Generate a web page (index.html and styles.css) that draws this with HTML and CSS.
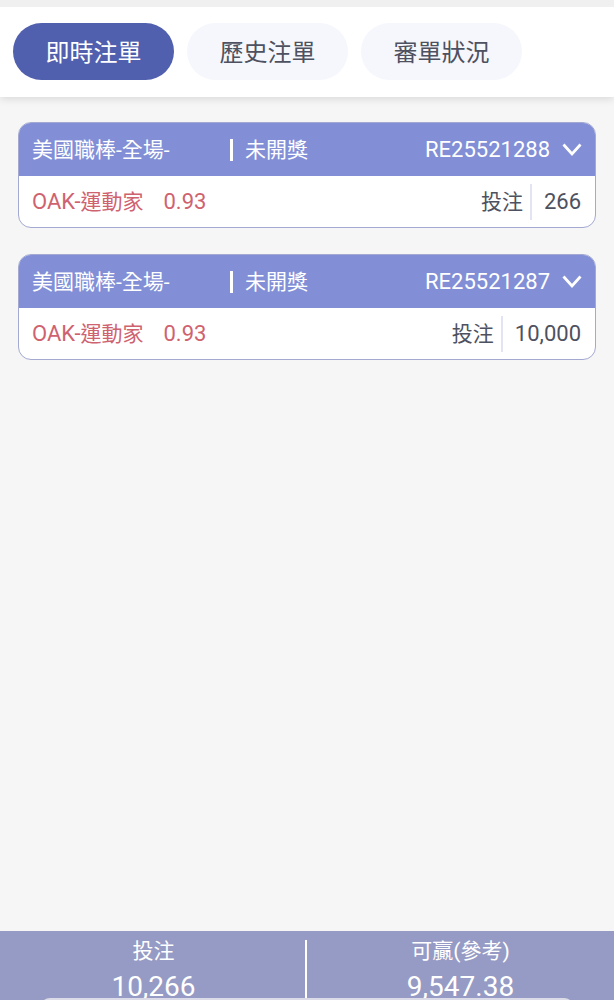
FILE: index.html
```html
<!DOCTYPE html>
<html lang="zh-Hant">
<head>
<meta charset="utf-8">
<meta name="viewport" content="width=device-width, initial-scale=1">
<title>即時注單</title>
<link rel="stylesheet" href="styles.css">
</head>
<body>
<div class="app">
  <nav class="tabs">
    <button class="tab tab-active" type="button">即時注單</button>
    <button class="tab" type="button">歷史注單</button>
    <button class="tab" type="button">審單狀況</button>
  </nav>
  <main class="bets">
    <article class="bet">
      <header class="bet-head">
        <span class="league">美國職棒-全場-</span>
        <span class="status">未開獎</span>
        <span class="number">RE25521288</span>
        <button class="toggle" type="button" aria-label="展開">
          <svg width="20" height="14" viewBox="0 0 20 14"><path d="M1.5 1.5 L10 11 L18.5 1.5" fill="none" stroke="currentColor" stroke-width="2.8"/></svg>
        </button>
      </header>
      <div class="bet-body">
        <span class="team"><span class="code">OAK-</span>運動家</span>
        <span class="odds">0.93</span>
        <span class="stake-label">投注</span>
        <span class="stake">266</span>
      </div>
    </article>
    <article class="bet">
      <header class="bet-head">
        <span class="league">美國職棒-全場-</span>
        <span class="status">未開獎</span>
        <span class="number">RE25521287</span>
        <button class="toggle" type="button" aria-label="展開">
          <svg width="20" height="14" viewBox="0 0 20 14"><path d="M1.5 1.5 L10 11 L18.5 1.5" fill="none" stroke="currentColor" stroke-width="2.8"/></svg>
        </button>
      </header>
      <div class="bet-body">
        <span class="team"><span class="code">OAK-</span>運動家</span>
        <span class="odds">0.93</span>
        <span class="stake-label">投注</span>
        <span class="stake">10,000</span>
      </div>
    </article>
  </main>
  <footer class="totals">
    <div class="total">
      <span class="total-label">投注</span>
      <span class="total-value">10,266</span>
    </div>
    <div class="total">
      <span class="total-label">可贏(參考)</span>
      <span class="total-value">9,547.38</span>
    </div>
    <div class="sheet"></div>
  </footer>
</div>
</body>
</html>
```
FILE: styles.css
```css
* {
  box-sizing: border-box;
}

body {
  margin: 0;
  background: #f6f6f6;
  color: #4e5160;
  font-family: Roboto, "Noto Sans CJK TC", sans-serif;
  font-size: 21px;
  line-height: 30px;
}

button {
  border: 0;
  font: inherit;
}

.app {
  display: flex;
  flex-direction: column;
  height: 100vh;
  overflow: hidden;
  border-top: 7px solid #f0f0f0;
}

.tabs {
  display: flex;
  gap: 13px;
  padding: 16px 13px 17px;
  background: #fff;
  box-shadow: 0 2px 8px rgba(0, 0, 0, 0.12);
}

.tab {
  padding: 14px 32px 11px;
  min-width: 161px;
  border-radius: 29px;
  background: #f6f7fc;
  color: #4e5160;
  font-size: 24px;
  line-height: 32px;
  white-space: nowrap;
}

.tab-active {
  background: #505fae;
  color: #fff;
}

.bets {
  flex: 1;
  display: flex;
  flex-direction: column;
  gap: 26px;
  padding: 25px 18px;
}

.bet {
  border: 1px solid #a3a9d0;
  border-radius: 13px;
  background: #fff;
  overflow: hidden;
}

.bet-head {
  display: flex;
  align-items: center;
  height: 53px;
  padding: 0 13px;
  background: #828fd6;
  color: #fff;
}

.league {
  flex: 0 0 36%;
}

.status {
  flex: 1;
  display: flex;
  align-items: center;
  gap: 12px;
}

.status::before {
  content: "";
  width: 3px;
  height: 22px;
  background: #fff;
}

.number,
.code,
.odds,
.stake {
  font-size: 22px;
}

.toggle {
  display: flex;
  margin-left: 12px;
  padding: 0;
  background: none;
  color: #fff;
}

.bet-body {
  display: flex;
  align-items: center;
  height: 51px;
  padding: 0 14px 0 13px;
}

.team,
.odds {
  color: #cf626f;
}

.odds {
  flex: 1;
  margin-left: 20px;
}

.stake {
  margin-left: 7px;
  padding: 3px 0 3px 12px;
  border-left: 2px solid #e2e4f3;
}

.totals {
  position: relative;
  display: flex;
  height: 69px;
  padding-top: 5px;
  background: #959bc4;
  color: #fff;
  overflow: hidden;
}

.total {
  flex: 1;
  display: flex;
  flex-direction: column;
  align-items: center;
  gap: 7px;
}

.total + .total::before {
  content: "";
  position: absolute;
  top: 9px;
  bottom: 0;
  left: 50%;
  width: 2px;
  margin-left: -2px;
  background: #fff;
}

.total-value {
  font-size: 28px;
  line-height: 28px;
}

.sheet {
  position: absolute;
  right: 40px;
  bottom: -18px;
  left: 40px;
  height: 20px;
  border-radius: 16px;
  background: #dcdce8;
}
```
